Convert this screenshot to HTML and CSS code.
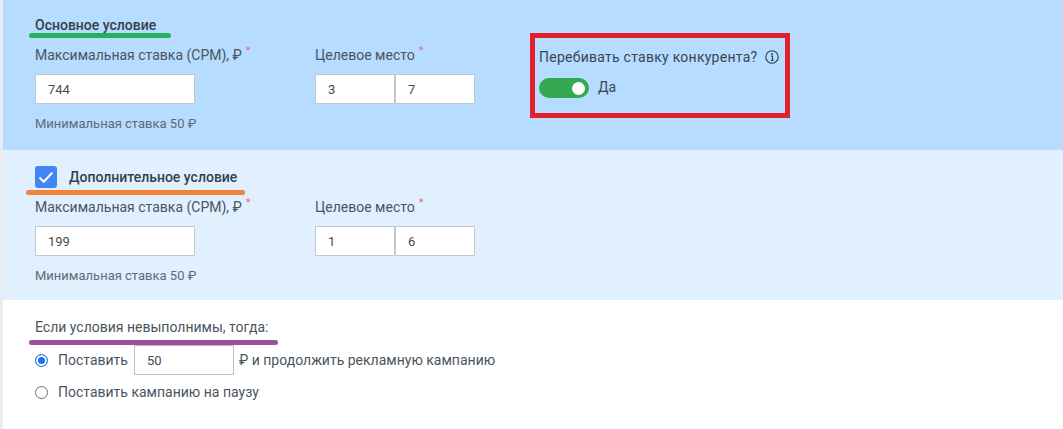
FILE: index.html
```html
<!DOCTYPE html>
<html lang="en">
<head>
    <meta charset="UTF-8">
    <meta name="viewport" content="width=device-width, initial-scale=1.0">
    <title>Условия ставки</title>
    <link rel="stylesheet" href="styles.css">
</head>
<body>
    <div class="page">
        <section class="condition condition-main">
            <h3 class="condition-title">Основное условие</h3>
            <span class="mark mark-green"></span>
            <div class="fields">
                <div class="field field-rate">
                    <label>Максимальная ставка (CPM), ₽<sup class="req">*</sup></label>
                    <input class="input input-rate" type="text" value="744">
                </div>
                <div class="field field-place">
                    <label>Целевое место<sup class="req">*</sup></label>
                    <div class="pair">
                        <input class="input input-place" type="text" value="3">
                        <input class="input input-place" type="text" value="7">
                    </div>
                </div>
                <div class="field field-beat">
                    <div class="beat-label">
                        Перебивать ставку конкурента?
                        <svg class="info" width="14" height="14" viewBox="0 0 14 14">
                            <circle cx="7" cy="7" r="6.2" fill="none" stroke="#2c3e50" stroke-width="1.1"/>
                            <circle cx="7" cy="4" r="0.9" fill="#2c3e50"/>
                            <path d="M5.9 6h1.6v4.2M5.8 10.4h2.6" fill="none" stroke="#2c3e50" stroke-width="1.1"/>
                        </svg>
                    </div>
                    <div class="switch-row">
                        <span class="switch"><span class="switch-knob"></span></span>
                        <span class="switch-text">Да</span>
                    </div>
                </div>
            </div>
            <p class="hint">Минимальная ставка 50 ₽</p>
            <span class="red-box"></span>
        </section>

        <section class="condition condition-extra">
            <div class="check-row">
                <span class="checkbox">
                    <svg width="22" height="22" viewBox="0 0 22 22">
                        <path d="M4.5 11.5l4.3 4.2 8.5-9" fill="none" stroke="#fff" stroke-width="2"/>
                    </svg>
                </span>
                <h3 class="condition-title">Дополнительное условие</h3>
            </div>
            <span class="mark mark-orange"></span>
            <div class="fields">
                <div class="field field-rate">
                    <label>Максимальная ставка (CPM), ₽<sup class="req">*</sup></label>
                    <input class="input input-rate" type="text" value="199">
                </div>
                <div class="field field-place">
                    <label>Целевое место<sup class="req">*</sup></label>
                    <div class="pair">
                        <input class="input input-place" type="text" value="1">
                        <input class="input input-place" type="text" value="6">
                    </div>
                </div>
            </div>
            <p class="hint">Минимальная ставка 50 ₽</p>
        </section>

        <section class="fallback">
            <div class="fallback-title">Если условия невыполнимы, тогда:</div>
            <span class="mark mark-purple"></span>
            <div class="radio-row radio-row-first">
                <span class="radio radio-on"></span>
                <span>Поставить</span>
                <input class="input input-bid" type="text" value="50">
                <span>₽ и продолжить рекламную кампанию</span>
            </div>
            <div class="radio-row">
                <span class="radio"></span>
                <span>Поставить кампанию на паузу</span>
            </div>
        </section>
    </div>
</body>
</html>
```

FILE: styles.css
```css
* {
    box-sizing: border-box;
}
body {
    margin: 0;
    font-family: Roboto, "Liberation Sans", sans-serif;
    font-size: 14px;
    color: #4a5560;
    background-color: #ffffff;
}
.page {
    height: 429px;
    border-left: 3px solid #e9edf0;
    overflow: hidden;
}
.condition {
    position: relative;
    height: 150px;
    padding-left: 32px;
    padding-top: 16px;
}
.condition-main {
    background-color: #b6dcff;
}
.condition-extra {
    background-color: #e0f0ff;
}
.condition-title {
    margin: 0;
    font-size: 14px;
    font-weight: 500;
    line-height: 18px;
    color: #36404a;
}
.fields {
    display: flex;
    margin-top: 11px;
}
.condition-extra .fields {
    margin-top: 9px;
}
.field-rate {
    width: 280px;
}
.field-place {
    width: 224px;
}
.field label {
    display: block;
    height: 29px;
    line-height: 20px;
}
.req {
    color: #e8707a;
    font-size: 11px;
    line-height: 0;
    margin-left: 4px;
}
.input {
    display: block;
    height: 30px;
    padding: 0 12px;
    border: 1px solid #c4c7ca;
    border-radius: 1px;
    background-color: #ffffff;
    font-family: inherit;
    font-size: 13px;
    color: #4a4a4a;
    outline: none;
}
.input-rate {
    width: 160px;
}
.input-place {
    width: 80px;
}
.pair {
    display: flex;
}
.field-beat {
    padding-top: 2px;
}
.beat-label {
    display: flex;
    align-items: center;
    gap: 8px;
    height: 20px;
    letter-spacing: 0.26px;
    color: #3a4652;
}
.switch-row {
    display: flex;
    align-items: center;
    gap: 9px;
    margin-top: 11px;
    color: #3a4652;
}
.switch-text {
    margin-top: -3px;
}
.switch {
    display: flex;
    align-items: center;
    justify-content: flex-end;
    width: 50px;
    height: 20px;
    padding-right: 4px;
    border-radius: 10px;
    background-color: #34a853;
}
.switch-knob {
    width: 13px;
    height: 13px;
    border-radius: 50%;
    background-color: #ffffff;
}
.hint {
    margin: 12px 0 0;
    font-size: 13px;
    line-height: 16px;
    color: #5f6b76;
}
.check-row {
    display: flex;
    align-items: center;
    gap: 12px;
}
.checkbox {
    display: block;
    width: 22px;
    height: 22px;
    border-radius: 3px;
    background-color: #4285f4;
}
.checkbox svg {
    display: block;
}
.fallback {
    position: relative;
    padding: 17px 0 0 32px;
}
.fallback-title {
    line-height: 20px;
}
.radio-row {
    display: flex;
    align-items: center;
    gap: 10px;
    height: 30px;
    margin-top: 2px;
}
.radio-row-first {
    margin-top: 8px;
}
.radio {
    width: 13px;
    height: 13px;
    border: 1px solid #6d6d6d;
    border-radius: 50%;
    background-color: #ffffff;
}
.radio-on {
    border-color: #1a73e8;
    background-color: #1a73e8;
    box-shadow: inset 0 0 0 2px #ffffff;
}
.input-bid {
    width: 100px;
    margin: 0 -5px 0 -4px;
    border-color: #bbbbbb;
}
/* marker strokes drawn on top of the screenshot */
.mark {
    position: absolute;
    height: 5px;
    border-radius: 3px;
}
.mark-green {
    left: 26px;
    top: 33px;
    width: 142px;
    background-color: #27ae60;
}
.mark-orange {
    left: 23px;
    top: 40px;
    width: 219px;
    background-color: #f58233;
}
.mark-purple {
    left: 26px;
    top: 40px;
    width: 249px;
    background-color: #9b4f9f;
}
.red-box {
    position: absolute;
    left: 527px;
    top: 33px;
    width: 260px;
    height: 85px;
    border: 5px solid #e0202f;
}
```
